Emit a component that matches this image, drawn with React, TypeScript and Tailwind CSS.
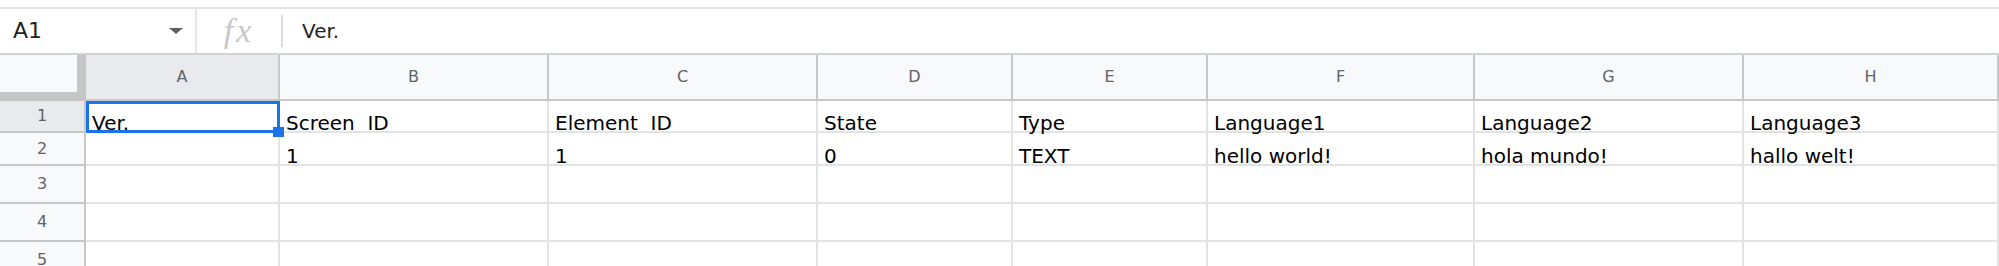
import React from 'react';

const columns = ['A', 'B', 'C', 'D', 'E', 'F', 'G', 'H'];

const rows: { num: number; height: string; cells: string[] }[] = [
    { num: 1, height: 'h-[32px]', cells: ['Ver.', 'Screen  ID', 'Element  ID', 'State', 'Type', 'Language1', 'Language2', 'Language3'] },
    { num: 2, height: 'h-[33px]', cells: ['', '1', '1', '0', 'TEXT', 'hello world!', 'hola mundo!', 'hallo welt!'] },
    { num: 3, height: 'h-[38px]', cells: ['', '', '', '', '', '', '', ''] },
    { num: 4, height: 'h-[38px]', cells: ['', '', '', '', '', '', '', ''] },
    { num: 5, height: 'h-[38px]', cells: ['', '', '', '', '', '', '', ''] },
];

const FormulaBar: React.FC = () => (
    <div className="flex h-[46px] items-center border-b-2 border-[#d3d3d3] bg-white">
        <div className="flex h-full w-[197px] items-center justify-between border-r-2 border-[#e6e6e6] pl-[13px] pr-[12px]">
            <span className="text-[22px] leading-none text-[#1f1f1f]">A1</span>
            <svg width="14" height="6" viewBox="0 0 14 6">
                <polygon points="0,0 14,0 7,6" fill="#5f6368" />
            </svg>
        </div>
        <div className="flex w-[84px] items-center justify-center">
            <span className="font-['Liberation_Serif',serif] text-[34px] italic leading-none tracking-[3px] text-[#c8c8c8]">fx</span>
        </div>
        <div className="h-[32px] w-[2px] bg-[#dcdcdc]" />
        <span className="pl-[19px] text-[20px] leading-none text-[#1f1f1f]">Ver.</span>
    </div>
);

const App: React.FC = () => {
    return (
        <div className="h-[266px] w-[1999px] overflow-hidden bg-white font-['DejaVu_Sans',sans-serif]">
            <div className="h-[9px] border-b-2 border-[#e3e3e3]" />
            <FormulaBar />

            <div className="grid grid-cols-[86px_194px_269px_269px_195px_195px_267px_269px_1fr]">
                {/* header row */}
                <div className="h-[46px] border-r-[9px] border-b-[9px] border-[#c6c6c6] bg-[#f8f9fa]" />
                {columns.map((c, i) => (
                    <div
                        key={c}
                        className={`flex h-[46px] items-center justify-center border-r-2 border-b-2 border-[#c7c7c7] text-[16px] text-[#5f6368] ${i === 0 ? 'bg-[#e8eaed]' : 'bg-[#f8f9fa]'}`}
                    >
                        {c}
                    </div>
                ))}

                {rows.map((row) => (
                    <React.Fragment key={row.num}>
                        <div
                            className={`flex ${row.height} items-center justify-center border-r-2 border-b-2 border-[#c7c7c7] text-[16px] text-[#5f6368] ${row.num === 1 ? 'bg-[#e8eaed]' : 'bg-[#f8f9fa]'}`}
                        >
                            {row.num}
                        </div>
                        {row.cells.map((text, ci) => (
                            <div key={ci} className={`relative ${row.height} border-r-2 border-b-2 border-[#e2e3e3]`}>
                                <div className="flex h-full items-end pl-[6px] text-[20px] leading-[20px] whitespace-pre text-black">
                                    <span className="relative top-[2px]">{text}</span>
                                </div>
                                {row.num === 1 && ci === 0 && (
                                    <>
                                        <div className="absolute top-0 left-0 -right-[2px] -bottom-[2px] border-[3px] border-[#1a73e8]" />
                                        <div className="absolute top-[26px] left-[187px] z-10 h-[10px] w-[11px] bg-[#1a73e8]" />
                                    </>
                                )}
                            </div>
                        ))}
                    </React.Fragment>
                ))}
            </div>
        </div>
    );
};

export default App;
